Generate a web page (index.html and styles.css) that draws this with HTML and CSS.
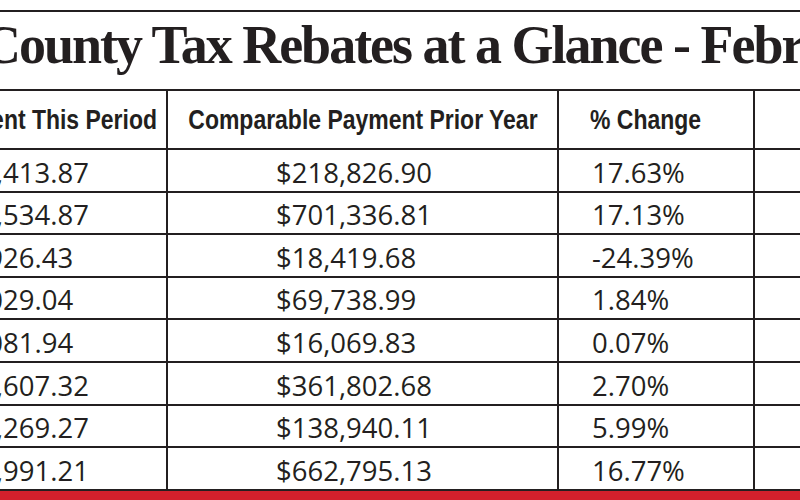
FILE: index.html
```html
<!DOCTYPE html>
<html>
<head>
<meta charset="utf-8">
<link rel="stylesheet" href="styles.css">
</head>
<body>
<div class="sheet">
  <div class="title">County Tax Rebates at a Glance - February 2024</div>
  <div class="row head">
    <div class="cell c1"><span class="label">Payment This Period</span></div>
    <div class="cell c2"><span class="label">Comparable Payment Prior Year</span></div>
    <div class="cell c3"><span class="label">% Change</span></div>
    <div class="cell c4"></div>
  </div>
  <div class="row data"><div class="cell c1">$257,413.87</div><div class="cell c2">$218,826.90</div><div class="cell c3">17.63%</div><div class="cell c4"></div></div>
  <div class="row data"><div class="cell c1">$821,534.87</div><div class="cell c2">$701,336.81</div><div class="cell c3">17.13%</div><div class="cell c4"></div></div>
  <div class="row data"><div class="cell c1">$13,926.43</div><div class="cell c2">$18,419.68</div><div class="cell c3">-24.39%</div><div class="cell c4"></div></div>
  <div class="row data"><div class="cell c1">$71,029.04</div><div class="cell c2">$69,738.99</div><div class="cell c3">1.84%</div><div class="cell c4"></div></div>
  <div class="row data"><div class="cell c1">$16,081.94</div><div class="cell c2">$16,069.83</div><div class="cell c3">0.07%</div><div class="cell c4"></div></div>
  <div class="row data"><div class="cell c1">$371,607.32</div><div class="cell c2">$361,802.68</div><div class="cell c3">2.70%</div><div class="cell c4"></div></div>
  <div class="row data"><div class="cell c1">$147,269.27</div><div class="cell c2">$138,940.11</div><div class="cell c3">5.99%</div><div class="cell c4"></div></div>
  <div class="row data"><div class="cell c1">$773,991.21</div><div class="cell c2">$662,795.13</div><div class="cell c3">16.77%</div><div class="cell c4"></div></div>
  <div class="redbar"></div>
</div>
</body>
</html>
```
FILE: styles.css
```css
html, body {
  margin: 0;
  padding: 0;
  background: #ffffff;
}
body {
  width: 800px;
  height: 500px;
  overflow: hidden;
  color: #231f20;
}
.sheet {
  margin-left: -200px;
  width: 1200px;
  padding-top: 10px;
}
.title {
  box-sizing: border-box;
  height: 81px;
  border-top: 2px solid #231f20;
  border-bottom: 2px solid #231f20;
  padding-left: 182px;
  font-family: "Liberation Serif", "Times New Roman", serif;
  font-weight: bold;
  font-size: 54px;
  line-height: 66px;
  letter-spacing: -2px;
  white-space: nowrap;
}
.row {
  display: grid;
  grid-template-columns: 366px 391px 196px 1fr;
  box-sizing: border-box;
  border-bottom: 2px solid #231f20;
}
.head {
  height: 59px;
}
.data {
  height: 42.6px;
}
.cell {
  display: flex;
  white-space: nowrap;
  box-sizing: border-box;
}
.c2, .c3, .c4 {
  border-left: 2px solid #231f20;
}
.head .cell {
  align-items: center;
  font-family: "Liberation Sans", Arial, sans-serif;
  font-weight: bold;
  font-size: 28px;
  line-height: 28px;
}
.label {
  display: inline-block;
  transform: scaleX(0.82);
}
.head .c1 {
  justify-content: flex-end;
  padding-right: 9px;
}
.head .c1 .label {
  transform-origin: right center;
}
.head .c2 {
  justify-content: center;
}
.head .c3 {
  padding-left: 31px;
}
.head .c3 .label {
  transform-origin: left center;
}
.data .cell {
  align-items: flex-end;
  padding-bottom: 5px;
  font-family: "Open Sans", "Noto Sans", sans-serif;
  font-weight: 500;
  font-size: 27.5px;
  line-height: 27px;
}
.data .c1 {
  padding-left: 133px;
}
.data .c2 {
  padding-left: 108px;
}
.data .c3 {
  padding-left: 33px;
}
.redbar {
  height: 20px;
  background: #d2202c;
}
```
